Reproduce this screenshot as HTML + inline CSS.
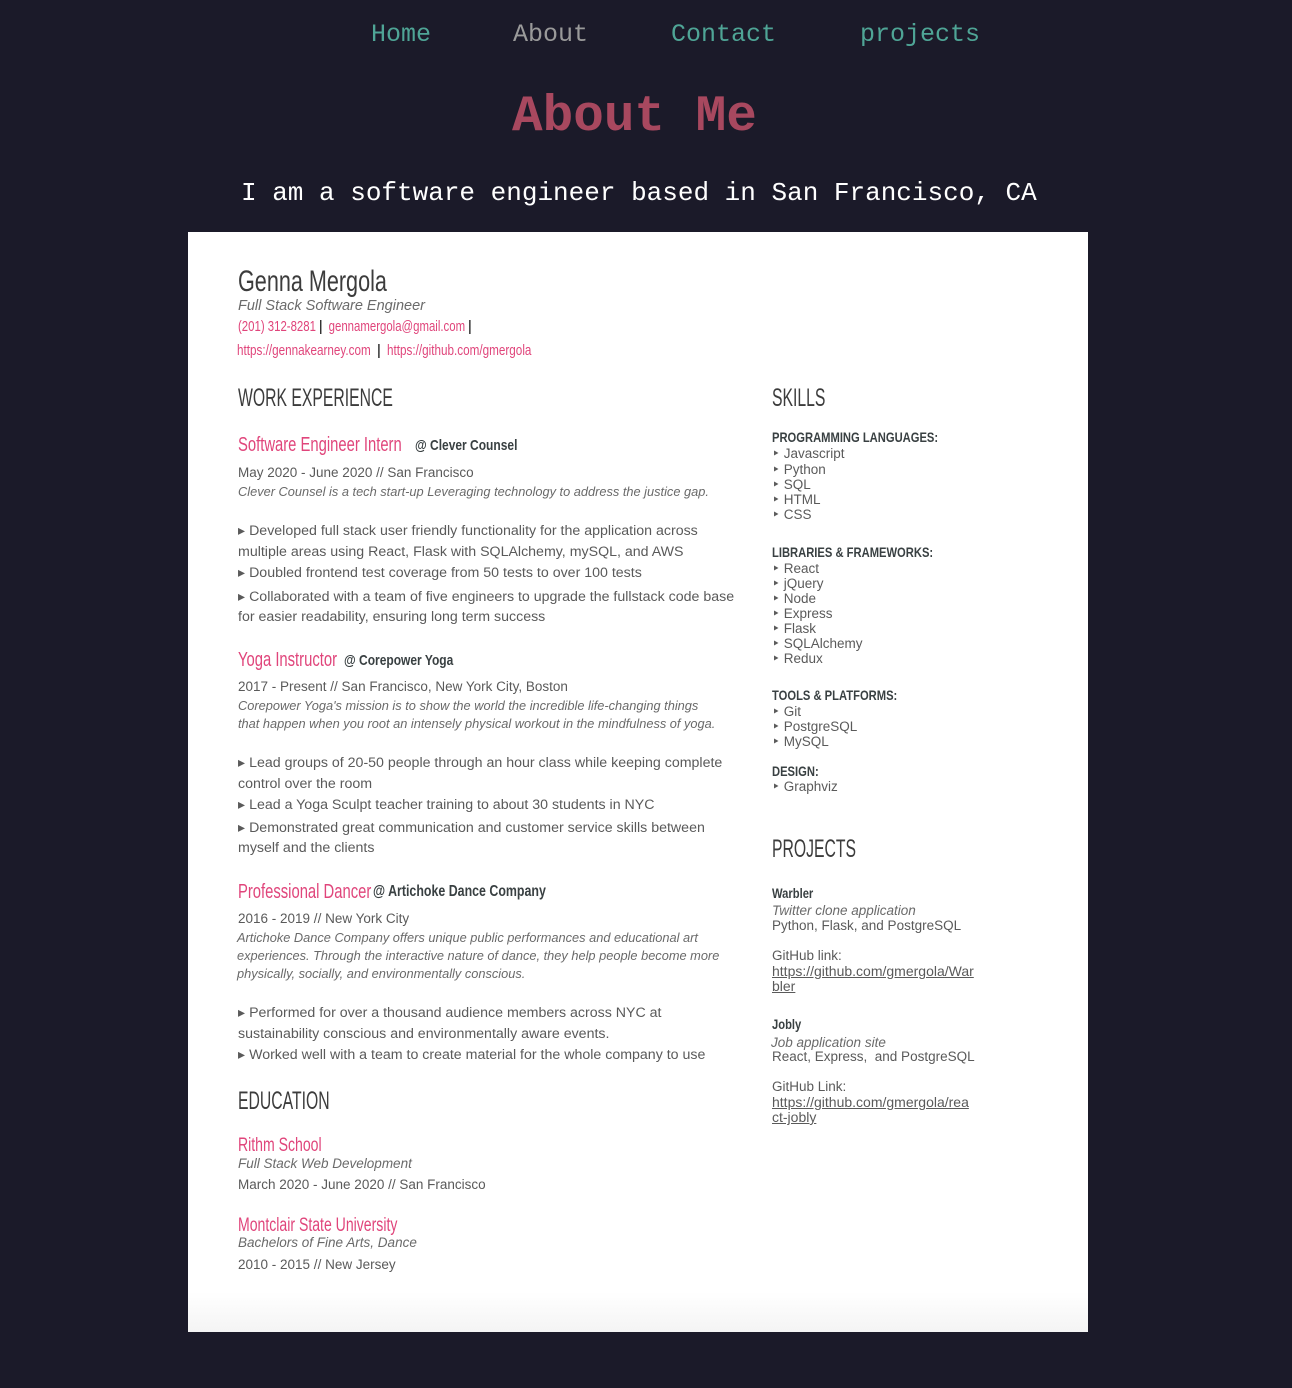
<!DOCTYPE html>
<html><head><meta charset="utf-8">
<style>
html,body{margin:0;padding:0}
body{width:1292px;height:1388px;background:#1b1a29;position:relative;overflow:hidden;font-family:"Liberation Sans",sans-serif}
.m{font-family:"Liberation Mono","Courier New",monospace;position:absolute;white-space:nowrap}
.nav{top:20px;font-size:25px;line-height:30px;color:#4fa596}
#res{position:absolute;left:188px;top:232px;width:900px;height:1100px;background:linear-gradient(#fff 0,#fff 1060px,#f4f4f4 1100px)}
.t{position:absolute;white-space:nowrap;font-size:13.5px;line-height:16px;color:#5a5a5a}
.i{font-style:italic;color:#6a6a6a}
.c{display:inline-block;transform:scaleX(.74);transform-origin:left center}
.p{color:#e0457b}
.h{color:#3c3c3c}
.h .c{transform:scaleX(.63)}
.b{font-weight:bold;color:#394042}
.b .c{transform:scaleX(.8)}
.u{text-decoration:underline}
.s{font-size:12.8px}
.l{font-size:14.2px}
</style></head><body>
<div class="m nav" style="left:371px">Home</div>
<div class="m nav" style="left:513px;color:#9a9a9a">About</div>
<div class="m nav" style="left:671px">Contact</div>
<div class="m nav" style="left:860px">projects</div>
<div class="m" style="left:512px;top:88px;font-size:51px;line-height:60px;font-weight:bold;color:#a8485f">About Me</div>
<div class="m" style="left:241px;top:178px;font-size:26px;line-height:30px;color:#fff">I am a software engineer based in San Francisco, CA</div>

<div id="res">
<div class="t h" style="left:50px;top:34px;font-size:30px;line-height:32px"><span class="c" style="transform:scaleX(.72)">Genna Mergola</span></div>
<div class="t i" style="left:50px;top:66px;font-size:14.5px">Full Stack Software Engineer</div>
<div class="t p" style="left:50px;top:87px;font-size:15px"><span class="c" style="transform:scaleX(.76)">(201) 312-8281 <b style="color:#333">|</b>&nbsp; gennamergola@gmail.com <b style="color:#333">|</b></span></div>
<div class="t p" style="left:49px;top:111px;font-size:15px"><span class="c" style="transform:scaleX(.78)">https://gennakearney.com &nbsp;<b style="color:#333">|</b>&nbsp; https://github.com/gmergola</span></div>

<div class="t h" style="left:50px;top:153px;font-size:25px;line-height:26px"><span class="c">WORK EXPERIENCE</span></div>

<div class="t p" style="left:50px;top:202px;font-size:20px;line-height:22px"><span class="c">Software Engineer Intern</span></div>
<div class="t b" style="left:227px;top:206px;font-size:15px"><span class="c">@ Clever Counsel</span></div>
<div class="t" style="left:50px;top:233px">May 2020 - June 2020 // San Francisco</div>
<div class="t i s" style="left:50px;top:252px">Clever Counsel is a tech start-up Leveraging technology to address the justice gap.</div>
<div class="t l" style="left:50px;top:291px">&#9656; Developed full stack user friendly functionality for the application across</div>
<div class="t l" style="left:50px;top:312px">multiple areas using React, Flask with SQLAlchemy, mySQL, and AWS</div>
<div class="t l" style="left:50px;top:333px">&#9656; Doubled frontend test coverage from 50 tests to over 100 tests</div>
<div class="t l" style="left:50px;top:357px">&#9656; Collaborated with a team of five engineers to upgrade the fullstack code base</div>
<div class="t l" style="left:50px;top:377px">for easier readability, ensuring long term success</div>

<div class="t p" style="left:50px;top:417px;font-size:20px;line-height:22px"><span class="c">Yoga Instructor</span></div>
<div class="t b" style="left:156px;top:421px;font-size:15px"><span class="c">@ Corepower Yoga</span></div>
<div class="t" style="left:50px;top:447px">2017 - Present // San Francisco, New York City, Boston</div>
<div class="t i s" style="left:50px;top:466px">Corepower Yoga's mission is to show the world the incredible life-changing things</div>
<div class="t i s" style="left:50px;top:484px">that happen when you root an intensely physical workout in the mindfulness of yoga.</div>
<div class="t l" style="left:50px;top:523px">&#9656; Lead groups of 20-50 people through an hour class while keeping complete</div>
<div class="t l" style="left:50px;top:544px">control over the room</div>
<div class="t l" style="left:50px;top:565px">&#9656; Lead a Yoga Sculpt teacher training to about 30 students in NYC</div>
<div class="t l" style="left:50px;top:588px">&#9656; Demonstrated great communication and customer service skills between</div>
<div class="t l" style="left:50px;top:608px">myself and the clients</div>

<div class="t p" style="left:50px;top:649px;font-size:20px;line-height:22px"><span class="c">Professional Dancer</span></div>
<div class="t b" style="left:185px;top:652px;font-size:15.5px"><span class="c">@ Artichoke Dance Company</span></div>
<div class="t" style="left:50px;top:679px">2016 - 2019 // New York City</div>
<div class="t i s" style="left:49px;top:698px">Artichoke Dance Company offers unique public performances and educational art</div>
<div class="t i s" style="left:49px;top:716px">experiences. Through the interactive nature of dance, they help people become more</div>
<div class="t i s" style="left:49px;top:734px">physically, socially, and environmentally conscious.</div>
<div class="t l" style="left:50px;top:773px">&#9656; Performed for over a thousand audience members across NYC at</div>
<div class="t l" style="left:50px;top:794px">sustainability conscious and environmentally aware events.</div>
<div class="t l" style="left:50px;top:815px">&#9656; Worked well with a team to create material for the whole company to use</div>

<div class="t h" style="left:50px;top:856px;font-size:25px;line-height:26px"><span class="c">EDUCATION</span></div>
<div class="t p" style="left:50px;top:903px;font-size:19px;line-height:22px"><span class="c">Rithm School</span></div>
<div class="t i" style="left:50px;top:924px">Full Stack Web Development</div>
<div class="t" style="left:50px;top:945px">March 2020 - June 2020 // San Francisco</div>
<div class="t p" style="left:50px;top:983px;font-size:19px;line-height:22px"><span class="c">Montclair State University</span></div>
<div class="t i" style="left:50px;top:1003px">Bachelors of Fine Arts, Dance</div>
<div class="t" style="left:50px;top:1025px">2010 - 2015 // New Jersey</div>

<div class="t h" style="left:584px;top:153px;font-size:25px;line-height:26px"><span class="c">SKILLS</span></div>
<div class="t b" style="left:584px;top:197px;font-size:14px"><span class="c">PROGRAMMING LANGUAGES:</span></div>
<div class="t" style="left:584px;top:214px">&#8227; Javascript</div>
<div class="t" style="left:584px;top:230px">&#8227; Python</div>
<div class="t" style="left:584px;top:245px">&#8227; SQL</div>
<div class="t" style="left:584px;top:260px">&#8227; HTML</div>
<div class="t" style="left:584px;top:275px">&#8227; CSS</div>
<div class="t b" style="left:584px;top:312px;font-size:14px"><span class="c">LIBRARIES &amp; FRAMEWORKS:</span></div>
<div class="t" style="left:584px;top:329px">&#8227; React</div>
<div class="t" style="left:584px;top:344px">&#8227; jQuery</div>
<div class="t" style="left:584px;top:359px">&#8227; Node</div>
<div class="t" style="left:584px;top:374px">&#8227; Express</div>
<div class="t" style="left:584px;top:389px">&#8227; Flask</div>
<div class="t" style="left:584px;top:404px">&#8227; SQLAlchemy</div>
<div class="t" style="left:584px;top:419px">&#8227; Redux</div>
<div class="t b" style="left:584px;top:455px;font-size:14px"><span class="c">TOOLS &amp; PLATFORMS:</span></div>
<div class="t" style="left:584px;top:472px">&#8227; Git</div>
<div class="t" style="left:584px;top:487px">&#8227; PostgreSQL</div>
<div class="t" style="left:584px;top:502px">&#8227; MySQL</div>
<div class="t b" style="left:584px;top:531px;font-size:14px"><span class="c">DESIGN:</span></div>
<div class="t" style="left:584px;top:547px">&#8227; Graphviz</div>

<div class="t h" style="left:584px;top:604px;font-size:25px;line-height:26px"><span class="c">PROJECTS</span></div>
<div class="t b" style="left:584px;top:653px;font-size:14px"><span class="c">Warbler</span></div>
<div class="t i" style="left:584px;top:671px">Twitter clone application</div>
<div class="t" style="left:584px;top:686px">Python, Flask, and PostgreSQL</div>
<div class="t" style="left:584px;top:716px">GitHub link:</div>
<div class="t u" style="left:584px;top:731px;font-size:14px">https://github.com/gmergola/War</div>
<div class="t u" style="left:584px;top:746px;font-size:14px">bler</div>
<div class="t b" style="left:584px;top:784px;font-size:14px"><span class="c">Jobly</span></div>
<div class="t i" style="left:583px;top:803px">Job application site</div>
<div class="t" style="left:584px;top:817px">React, Express,&nbsp; and PostgreSQL</div>
<div class="t" style="left:584px;top:847px">GitHub Link:</div>
<div class="t u" style="left:584px;top:862px;font-size:14px">https://github.com/gmergola/rea</div>
<div class="t u" style="left:584px;top:877px;font-size:14px">ct-jobly</div>
</div>
</body></html>
